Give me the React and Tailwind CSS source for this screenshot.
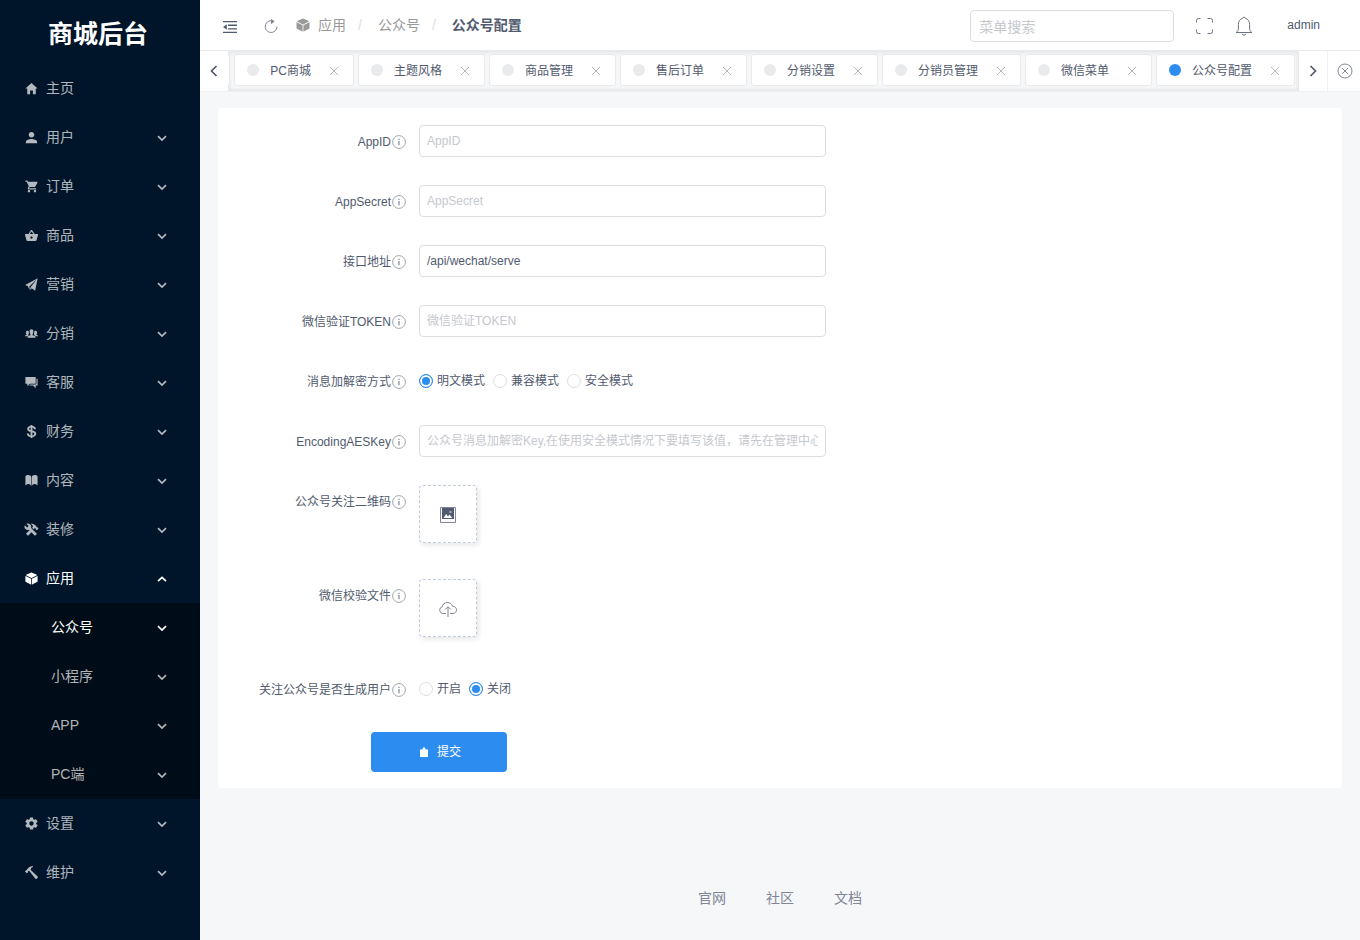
import React from "react";
import {
  IoMdHome, IoMdPerson, IoMdCart, IoMdBasket, IoIosPaperPlane, IoIosPeople, IoMdChatboxes,
  IoLogoUsd, IoIosBook, IoMdConstruct, IoIosCube, IoMdSettings, IoMdHammer,
} from "react-icons/io";

const menu = [
  { label: "主页", icon: IoMdHome, leaf: true },
  { label: "用户", icon: IoMdPerson },
  { label: "订单", icon: IoMdCart },
  { label: "商品", icon: IoMdBasket },
  { label: "营销", icon: IoIosPaperPlane },
  { label: "分销", icon: IoIosPeople },
  { label: "客服", icon: IoMdChatboxes },
  { label: "财务", icon: IoLogoUsd },
  { label: "内容", icon: IoIosBook },
  { label: "装修", icon: IoMdConstruct },
  { label: "应用", icon: IoIosCube, open: true, children: ["公众号", "小程序", "APP", "PC端"] },
  { label: "设置", icon: IoMdSettings },
  { label: "维护", icon: IoMdHammer },
];

const tabs = ["PC商城", "主题风格", "商品管理", "售后订单", "分销设置", "分销员管理", "微信菜单", "公众号配置"];

function Chevron({ up }) {
  return (
    <svg viewBox="0 0 14 14" className="h-3.5 w-3.5" fill="none" stroke="currentColor" strokeWidth="1.7">
      <path d={up ? "M3 9.2 7 5.4l4 3.8" : "M3 5.2 7 9l4-3.8"} />
    </svg>
  );
}

function Caret({ left }) {
  return (
    <svg viewBox="0 0 14 14" className="h-3.5 w-3.5" fill="none" stroke="currentColor" strokeWidth="1.7">
      <path d={left ? "M9.5 2 4.5 7l5 5" : "M4.5 2l5 5-5 5"} />
    </svg>
  );
}

function MenuItem({ item }) {
  const Icon = item.icon;
  return (
    <li>
      <button
        type="button"
        className={`flex h-[49px] w-full items-center gap-[7px] pr-[31px] pl-6 text-left text-sm ${item.open ? "text-white" : "text-white/70"}`}
      >
        <Icon className="h-[15px] w-[15px]" />
        <span className="flex-1 pb-0.5">{item.label}</span>
        {!item.leaf && <Chevron up={item.open} />}
      </button>
      {item.children && (
        <ul className="bg-[#000c17]">
          {item.children.map((c, i) => (
            <li key={c}>
              <button
                type="button"
                className={`flex h-[49px] w-full items-center pr-[31px] pl-[51px] text-left text-sm ${i === 0 ? "text-white" : "text-white/70"}`}
              >
                <span className="flex-1 pb-0.5">{c}</span>
                <Chevron />
              </button>
            </li>
          ))}
        </ul>
      )}
    </li>
  );
}

function Tab({ label, active }) {
  return (
    <div className="flex h-8 shrink-0 items-center rounded-[3px] border border-[#e8eaec] bg-white px-3">
      <span className={`mr-[11px] h-3 w-3 rounded-full ${active ? "bg-[#2d8cf0]" : "bg-[#e8eaec]"}`} />
      <button type="button" className="pt-0.5 whitespace-nowrap">{label}</button>
      <button type="button" aria-label={`关闭${label}`} className="ml-4 h-3.5 w-3.5 text-[#b8b8b8]">
        <svg viewBox="0 0 14 14" className="h-3.5 w-3.5" fill="none" stroke="currentColor">
          <path d="M3 4l8 8M11 4l-8 8" />
        </svg>
      </button>
    </div>
  );
}

function InfoIcon() {
  return (
    <svg viewBox="0 0 16 16" className="mt-0.5 h-4 w-4 shrink-0" fill="none" stroke="#a3a7ae">
      <circle cx="8" cy="8" r="6.4" />
      <path d="M8 7v4.2M8 4.8v1.2" stroke="#80858e" strokeWidth="1.2" />
    </svg>
  );
}

function Row({ label, id, children, tall }) {
  return (
    <div className={`flex ${tall ? "mb-9" : "mb-7"}`}>
      <div className="flex h-8 w-[185px] shrink-0 items-center justify-end pr-3">
        <label htmlFor={id} className="pt-0.5 whitespace-nowrap">{label}</label>
        <InfoIcon />
      </div>
      {children}
    </div>
  );
}

function Field({ id, ...rest }) {
  return (
    <input
      id={id}
      type="text"
      className="h-8 w-full max-w-[407px] rounded border border-[#dcdee2] bg-white px-[7px] text-xs text-[#515a6e] outline-none placeholder:text-[#c5c8ce]"
      {...rest}
    />
  );
}

function Radios({ name, options, checked }) {
  return (
    <div className="flex h-8 items-center gap-2">
      {options.map((o) => (
        <label key={o} className="flex items-center gap-1">
          <input
            type="radio"
            name={name}
            defaultChecked={o === checked}
            className="h-3.5 w-3.5 appearance-none rounded-full border border-[#dcdee2] bg-white checked:border-[#2d8cf0] checked:bg-[#2d8cf0] checked:shadow-[inset_0_0_0_2px_#fff]"
          />
          {o}
        </label>
      ))}
    </div>
  );
}

function UploadBox({ id, label, children }) {
  return (
    <button
      id={id}
      type="button"
      aria-label={label}
      className="flex h-[58px] w-[58px] items-center justify-center rounded border border-dashed border-[#c0ccda] bg-white pt-0.5 shadow-[2px_2px_5px_rgba(0,0,0,0.1)]"
    >
      {children}
    </button>
  );
}

export default function App() {
  return (
    <div className="flex min-h-screen bg-[#f5f7f9] font-['Liberation_Sans','Noto_Sans_CJK_SC',sans-serif] text-xs text-[#515a6e]">
      <aside className="w-[200px] shrink-0 bg-[#001529]">
        <h1 className="flex h-16 items-center justify-center pt-1.5 pr-1 text-[25px] font-bold text-white">商城后台</h1>
        <nav>
          <ul>
            {menu.map((m) => <MenuItem key={m.label} item={m} />)}
          </ul>
        </nav>
      </aside>

      <div className="flex min-w-0 flex-1 flex-col">
        <header className="flex h-[51px] shrink-0 items-center border-b border-[#e8eaec] bg-white pr-10 pl-[22px]">
          <button type="button" aria-label="收起菜单" className="mt-1">
            <svg viewBox="0 0 16 14" className="h-3.5 w-4" fill="currentColor">
              <path d="M1 1h14v1.3H1zM6 4.6h9v1.3H6zM6 8.2h9v1.3H6zM1 11.8h14v1.3H1zM1 7l3.8-2.7v5.4z" />
            </svg>
          </button>
          <button type="button" aria-label="刷新" className="mt-0.5 ml-6 text-[#808695]">
            <svg viewBox="0 0 18 18" className="h-[18px] w-[18px]" fill="none" stroke="currentColor">
              <path d="M11.7 4.3A5.9 5.9 0 1 0 15 9.6" />
              <path d="M9 1.8 12.6 4.6 9 7.2z" fill="currentColor" stroke="none" />
            </svg>
          </button>
          <nav className="ml-[15px] flex items-center text-sm text-[#999]">
            <IoIosCube className="mr-[7px] h-4 w-4" />
            <a href="#app">应用</a>
            <span className="mx-3 text-[#dcdee2]">/</span>
            <a href="#wechat" className="ml-1">公众号</a>
            <span className="mx-3 text-[#dcdee2]">/</span>
            <span className="ml-1 font-bold text-[#515a6e]">公众号配置</span>
          </nav>
          <div className="ml-auto flex items-center">
            <input
              type="text"
              aria-label="菜单搜索"
              placeholder="菜单搜索"
              className="mt-0.5 h-8 w-[204px] rounded border border-[#dcdee2] bg-white px-2 pt-0.5 text-sm outline-none placeholder:text-[#c5c8ce]"
            />
            <button type="button" aria-label="全屏" className="mt-0.5 ml-[18px]">
              <svg viewBox="0 0 24 24" className="h-6 w-6" fill="none" stroke="#6b7283">
                <path d="M8.5 4.5h-2a2 2 0 0 0-2 2v2M15.500 4.500h3a2 2 0 0 1 2 2v2M8.500 19.500h-2a2 2 0 0 1-2-2v-2M15.500 19.500h3a2 2 0 0 0 2-2v-2" />
              </svg>
            </button>
            <button type="button" aria-label="通知" className="mt-0.5 ml-4">
              <svg viewBox="0 0 24 24" className="h-6 w-6" fill="none" stroke="#6b7283">
                <path d="M4.2 18.500h15.600c-1.400-1.200-2.200-2.200-2.200-4.500v-3.500c0-3.400-1.700-5.500-4.200-6.100-.1-.7-.6-1.200-1.400-1.200s-1.300.5-1.400 1.200c-2.500.6-4.200 2.700-4.200 6.100V14c0 2.300-.8 3.300-2.200 4.500z" />
                <path d="M10.200 19.800c.2.900.9 1.400 1.800 1.400s1.600-.5 1.800-1.400" />
              </svg>
            </button>
            <a href="#admin" className="ml-[31px]">admin</a>
          </div>
        </header>

        <div className="flex h-[41px] shrink-0 border-b border-[#f0f0f0] bg-white">
          <button type="button" aria-label="向左" className="flex w-7 shrink-0 items-center justify-center">
            <Caret left />
          </button>
          <div className="flex min-w-0 flex-1 items-start justify-end gap-1 overflow-hidden bg-[#f5f7f9] px-1 pt-[3px] shadow-[inset_0_0_3px_2px_rgba(100,100,100,0.1)]">
            <span aria-hidden="true" className="h-8 w-6 shrink-0 rounded-[3px] border border-[#e8eaec] bg-white" />
            {tabs.map((t, i) => <Tab key={t} label={t} active={i === tabs.length - 1} />)}
          </div>
          <button type="button" aria-label="向右" className="flex w-7 shrink-0 items-center justify-center">
            <Caret />
          </button>
          <button type="button" aria-label="关闭标签" className="flex w-[33px] shrink-0 items-center justify-center border-l border-[#f0f0f0] pl-0.5">
            <svg viewBox="0 0 18 18" className="h-[18px] w-[18px]" fill="none" stroke="#808695">
              <circle cx="9" cy="9" r="7" />
              <path d="M6 6l6 6M12 6l-6 6" />
            </svg>
          </button>
        </div>

        <main className="px-[18px] pt-4">
          <form className="rounded bg-white px-4 pt-[17px] pb-4" onSubmit={(e) => e.preventDefault()}>
            <Row label="AppID" id="appid"><Field id="appid" placeholder="AppID" /></Row>
            <Row label="AppSecret" id="secret"><Field id="secret" placeholder="AppSecret" /></Row>
            <Row label="接口地址" id="api"><Field id="api" defaultValue="/api/wechat/serve" /></Row>
            <Row label="微信验证TOKEN" id="token"><Field id="token" placeholder="微信验证TOKEN" /></Row>
            <Row label="消息加解密方式">
              <Radios name="mode" options={["明文模式", "兼容模式", "安全模式"]} checked="明文模式" />
            </Row>
            <Row label="EncodingAESKey" id="aes">
              <Field id="aes" placeholder="公众号消息加解密Key,在使用安全模式情况下要填写该值，请先在管理中心修改" />
            </Row>
            <Row label="公众号关注二维码" id="qr" tall>
              <UploadBox id="qr" label="公众号关注二维码">
                <svg viewBox="0 0 16 16" className="h-4 w-4">
                  <path d="M.5.5h15v15H.5z" fill="#fff" stroke="#808695" />
                  <path d="M2 1h12v11H2z" fill="#515a6e" />
                  <path d="M3.5 11l2.700-4 1.800 2.500 1.500-2 2.700 3.500z" fill="#fff" />
                  <path d="M9.5 4h2v2h-2z" fill="#aab0bb" />
                </svg>
              </UploadBox>
            </Row>
            <Row label="微信校验文件" id="file" tall>
              <UploadBox id="file" label="微信校验文件">
                <svg viewBox="0 0 20 18" className="h-[18px] w-5" fill="none" stroke="#808695">
                  <path d="M8 13.5H4.8a3.4 3.4 0 0 1-.5-6.700c.2-2.700 2.500-4.300 5.200-4.300 2.300 0 4.300 1.400 4.900 3.700 2.400 0 4.100 1.600 4.100 3.700s-1.500 3.600-3.700 3.600H12" />
                  <path d="M10 17V7M7.2 9.5 10 6.700l2.800 2.800" />
                </svg>
              </UploadBox>
            </Row>
            <Row label="关注公众号是否生成用户">
              <Radios name="create" options={["开启", "关闭"]} checked="关闭" />
            </Row>
            <button
              type="submit"
              className="-mt-px ml-[137px] flex h-10 w-[136px] items-center justify-center gap-1.5 rounded bg-[#2d8cf0] text-white"
            >
              <svg viewBox="0 0 14 14" className="h-3.5 w-3.5" fill="currentColor">
                <path d="M3.5 4.5h2v-1L7 2l1.500 1.500v1h2q.5 0 .5.500v6.500q0 .5-.5.500h-7q-.5 0-.5-.5V5q0-.5.5-.5z" />
              </svg>
              提交
            </button>
          </form>
        </main>

        <footer className="flex justify-center gap-10 pt-[100px] pb-8 text-sm text-[#808695]">
          <a href="#site">官网</a>
          <a href="#community">社区</a>
          <a href="#docs">文档</a>
        </footer>
      </div>
    </div>
  );
}
